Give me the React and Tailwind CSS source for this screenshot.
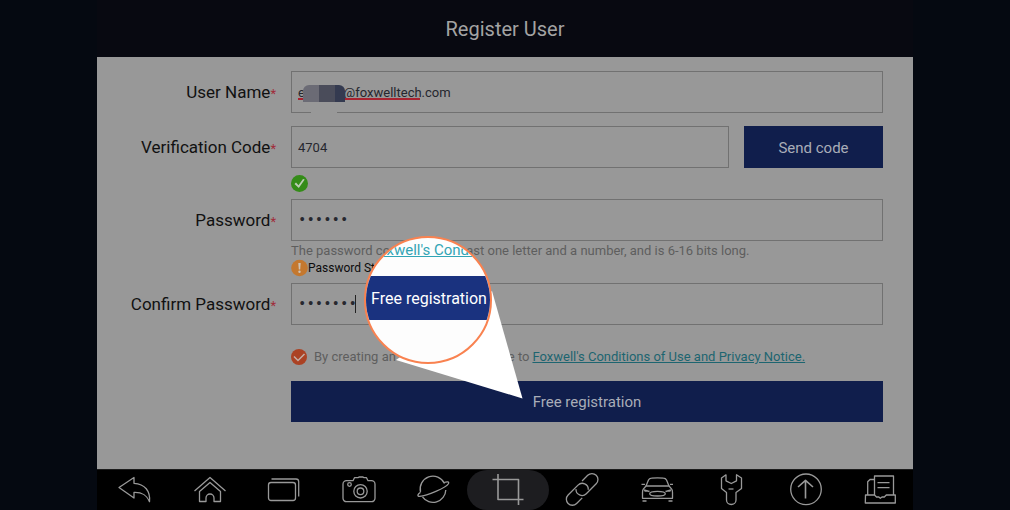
import React, { useState } from "react";

const navItems = [
  {
    name: "Back",
    icon: <path d="M2 15.5 17 5.5v5.8C28 12 33.5 19 32.5 29.7 29.5 22.5 25 20 17 20.3V26Z" />,
  },
  {
    name: "Home",
    icon: (
      <>
        <path d="M2.5 19 18 5.5 33.5 19" />
        <path d="M7.5 19.5v10H14V26a4 4 0 0 1 8 0v3.5h6.5v-10L18 10.5Z" />
      </>
    ),
  },
  {
    name: "Recent apps",
    icon: (
      <>
        <rect x="2.5" y="10.5" width="27" height="18" rx="2.5" />
        <path d="M5.5 7H30a2.7 2.7 0 0 1 2.7 2.7v14.8" />
      </>
    ),
  },
  {
    name: "Camera",
    icon: (
      <>
        <path d="M5.5 8.7H12l1.5-3H17l1-.7h4l1 .7h2.5l1.5 3h3.5A3.5 3.5 0 0 1 34 12.2v14a3.5 3.5 0 0 1-3.5 3.5h-25A3.5 3.5 0 0 1 2 26.2v-14a3.5 3.5 0 0 1 3.5-3.5Z" />
        <circle cx="19.5" cy="19.3" r="6.7" />
        <circle cx="19.5" cy="19.3" r="3.3" />
        <circle cx="8.5" cy="12.5" r="1.8" />
      </>
    ),
  },
  {
    name: "Browser",
    icon: (
      <>
        <path d="M5.5 20A12.8 12.8 0 0 1 29.5 11.5M7.5 24.8A12.8 12.8 0 0 0 30.8 18" />
        <path d="M5.5 20.3C2.5 21.8 2 24.6 4.5 24.4 12 23.5 31 16 33.4 11.8c1.2-2.3-1.4-2.3-4.4-1.3" />
      </>
    ),
  },
  {
    name: "Screenshot",
    active: true,
    icon: (
      <>
        <path d="M8 2v25.5H33.500" strokeWidth="1.6" />
        <path d="M2.500 7.5h26V33" strokeWidth="1.6" />
      </>
    ),
  },
  {
    name: "Link",
    icon: (
      <>
        <path
          d="M-1-6H7A6 6 0 0 1 7 6H-7A6 6 0 0 1-11-4.5"
          transform="translate(23 12.5) rotate(-45)"
        />
        <path
          d="M1 6H-7A6 6 0 0 1-7-6H7A6 6 0 0 1 11 4.5"
          transform="translate(13.3 22.3) rotate(-45)"
        />
      </>
    ),
  },
  {
    name: "Vehicle",
    icon: (
      <>
        <path d="M7 14 9.5 8C10 6.8 11 6.3 12.5 6.2 16 5.8 21 5.8 24.5 6.2c1.5.1 2.3.6 3 1.8l2.5 6" />
        <path d="M7 14h23l2.7 3.2c.8 1 .8 2 .8 3.3v5.8H3.5v-5.8c0-1.3 0-2.3.8-3.3Z" />
        <path d="M2.5 12.3H6M31 12.3h3M5 18l5.5 1.5M5.5 19h3.5M32 18l-5.5 1.5M31.5 19H28" />
        <ellipse cx="18.5" cy="21.7" rx="7.8" ry="2.3" />
        <path d="M3.5 29h4M29.5 29h4" />
      </>
    ),
  },
  {
    name: "Settings",
    icon: (
      <>
        <path d="M13 2.8 8.5 6v10.5l5 4V28c0 6 9.5 6 9.5 0v-7.5l5.5-4V6L23.5 2.8v6l-5.2 2.7L13 8.8Z" />
        <path d="M15.5 17h5" />
      </>
    ),
  },
  {
    name: "Upload",
    icon: (
      <>
        <circle cx="18" cy="17.3" r="15.3" />
        <path d="M17.5 26.5V8.5M10 15l7.500-6.700L25 15" strokeWidth="1.6" />
      </>
    ),
  },
  {
    name: "Documents",
    icon: (
      <>
        <path d="M12.5 23V4h19v19M12.5 7.5H8L5.7 9.8V23" />
        <path d="M15.5 10.7h12M15.5 15.7h12" />
        <path d="M3.5 23h9l2 2h2.3l1.5 1.3L20 25h2.3l2-2h9v8h-30Z" />
      </>
    ),
  },
];

const inputClass =
  "h-[42px] w-full border border-[#717171] bg-transparent px-1.5 text-[#26272e] outline-none";

function Label({ htmlFor, children }) {
  return (
    <label htmlFor={htmlFor} className="pt-0.5 text-right text-[17px] leading-6 text-[#111]">
      {children}
      <span className="text-[13px] text-[#a02c3a]">*</span>
    </label>
  );
}

function Callout() {
  return (
    <div className="pointer-events-none absolute left-[267px] top-[179px] text-white" aria-hidden="true">
      <svg width="160" height="164" viewBox="0 0 160 164" className="block">
        <path d="M128 55 158.500 162.500 32 124Z" fill="#fff" />
      </svg>
      <div className="absolute left-0 top-0 size-32 overflow-hidden rounded-full border-2 border-[#f98250] bg-[#fdfdfd]">
        <p className="h-[38px] whitespace-nowrap pl-1 pt-0.5 text-[15px] leading-5 text-[#32a5b5] underline">
          Foxwell's Conditions
        </p>
        <p className="flex h-11 items-center justify-center whitespace-nowrap bg-[#1a327f] pl-0.5 pt-0.5 text-base">
          Free registration
        </p>
      </div>
    </div>
  );
}

export default function App() {
  const [userName, setUserName] = useState("e            @foxwelltech.com");
  const [code, setCode] = useState("4704");
  const [password, setPassword] = useState("abc123");
  const [confirm, setConfirm] = useState("abc1234");
  const [agree, setAgree] = useState(true);

  return (
    <div className="flex min-h-screen flex-col bg-[#050911] px-[97px] font-['Roboto',sans-serif]">
      <header className="flex h-[57px] items-center justify-center bg-[#080911]">
        <h1 className="text-xl text-[#a3a3a3]">Register User</h1>
      </header>

      <main className="relative flex-1 bg-[#989898] pr-[30px] pt-3.5">
        <form
          onSubmit={(e) => e.preventDefault()}
          className="grid grid-cols-[179px_1fr] items-center gap-x-[15px]"
        >
          <Label htmlFor="userName">User Name</Label>
          <div className="relative">
            <input
              id="userName"
              value={userName}
              onChange={(e) => setUserName(e.target.value)}
              spellCheck={false}
              className={`${inputClass} text-[13px]`}
            />
            <span className="absolute left-[7px] top-[27px] h-0.5 w-[122px] bg-[#a82330]" />
            {/* masked part of the address */}
            <span className="absolute left-3 top-3.5 flex h-[17px] w-[42px] overflow-hidden rounded-t-md">
              <span className="w-4 bg-[#6b6b75]" />
              <span className="w-4 bg-[#4a4c5a]" />
              <span className="flex-1 bg-[#343a50]" />
            </span>
            <span className="absolute bottom-0 left-5 h-px w-[26px] bg-[#989898]" />
          </div>

          <div className="col-span-2 h-[13px]" />

          <Label htmlFor="code">Verification Code</Label>
          <div className="flex gap-[15px]">
            <input
              id="code"
              value={code}
              onChange={(e) => setCode(e.target.value)}
              className={`${inputClass} min-w-0 flex-1 text-[13px]`}
            />
            <button
              type="button"
              className="h-[42px] w-[139px] bg-[#101e4c] pt-0.5 text-[15px] text-[#a9adb8]"
            >
              Send code
            </button>
          </div>

          <div className="col-start-2 flex h-[31px] items-center">
            <svg width="18" height="18" viewBox="0 0 18 18">
              <circle cx="8.500" cy="8.500" r="8.500" fill="#348c18" />
              <path d="M3.500 9 5 7.500 7.500 10.200 12 4 13.700 4.500 7.800 13Z" fill="#bccdb5" />
            </svg>
          </div>

          <Label htmlFor="password">Password</Label>
          <input
            id="password"
            type="password"
            value={password}
            onChange={(e) => setPassword(e.target.value)}
            className={`${inputClass} font-['Liberation_Mono',monospace] text-sm`}
          />

          <div className="col-start-2 h-[42px] whitespace-nowrap pt-0.5">
            <p className="flex gap-4 text-[13px] leading-4 text-[#5e5e5e]">
              <span>The password contains</span>
              <span>at least one letter and a number, and is 6-16 bits long.</span>
            </p>
            <p className="flex items-center text-xs leading-[18px] text-[#0c0c0c]">
              <svg width="17" height="18" viewBox="0 0 17 18">
                <circle cx="8.500" cy="9" r="8.300" fill="#c4782f" />
                <path d="M7.300 4h2.400l-.5 6.500H7.800Z" fill="#cfc2b2" />
                <circle cx="8.500" cy="12.800" r="1.200" fill="#cfc2b2" />
              </svg>
              Password Strength
            </p>
          </div>

          <Label htmlFor="confirm">Confirm Password</Label>
          <div className="relative">
            <input
              id="confirm"
              type="password"
              value={confirm}
              onChange={(e) => setConfirm(e.target.value)}
              className={`${inputClass} font-['Liberation_Mono',monospace] text-sm`}
            />
            <span className="absolute left-16 top-3 h-[18px] w-px bg-[#222]" />
          </div>

          <div className="col-start-2 flex h-14 items-center gap-[7px] whitespace-nowrap pt-2 text-[13px] text-[#5e5e5e]">
            <span className="relative size-4">
              <input
                id="agree"
                type="checkbox"
                checked={agree}
                onChange={(e) => setAgree(e.target.checked)}
                className="block size-4 appearance-none rounded-full bg-[#555] checked:bg-[#ab4224]"
              />
              <svg
                width="16"
                height="16"
                viewBox="0 0 16 16"
                fill="none"
                stroke="#c4aea6"
                strokeWidth="1.500"
                className="pointer-events-none absolute left-0 top-0"
              >
                <path d="m3 7.500 4 4L13.500 5" />
              </svg>
            </span>
            <label htmlFor="agree" className="flex gap-2.5">
              <span>By creating an account,</span>
              <span>you agree to</span>
            </label>
            <a href="#" className="-ml-1 text-[#1d6570] underline">
              Foxwell's Conditions of Use and Privacy Notice.
            </a>
          </div>

          <button
            type="submit"
            className="col-start-2 h-[41px] bg-[#101e4c] pt-0.5 text-[15px] text-[#a9adb8]"
          >
            Free registration
          </button>
        </form>

        <Callout />
      </main>

      <nav className="flex h-[41px] items-center justify-between border-t border-[#1c1c1c] bg-black pl-5 pr-[15px]">
        {navItems.map((item) => (
          <button
            key={item.name}
            aria-label={item.name}
            className={
              item.active
                ? "-mx-[23px] flex h-10 w-[82px] items-center justify-center rounded-full bg-[#1d1d20]"
                : "flex h-10 w-9 items-center justify-center"
            }
          >
            <svg
              width="36"
              height="36"
              viewBox="0 0 36 36"
              fill="none"
              stroke="#999"
              strokeWidth="1.300"
              strokeLinejoin="round"
            >
              {item.icon}
            </svg>
          </button>
        ))}
      </nav>
    </div>
  );
}
